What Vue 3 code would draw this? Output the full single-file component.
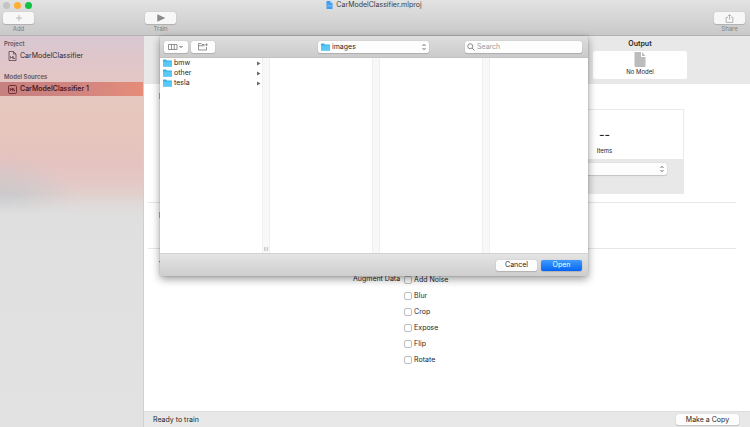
<script setup>
import { ref } from 'vue'

const folders = ['bmw', 'other', 'tesla']
const augmentations = ref([
  { id: 'noise', label: 'Add Noise', on: false },
  { id: 'blur', label: 'Blur', on: false },
  { id: 'crop', label: 'Crop', on: false },
  { id: 'expose', label: 'Expose', on: false },
  { id: 'flip', label: 'Flip', on: false },
  { id: 'rotate', label: 'Rotate', on: false }
])
const query = ref('')
</script>

<template>
  <div class="window">
    <header class="toolbar">
      <div class="titlebar">
        <div class="lights">
          <span class="light grey"></span>
          <span class="light amber"></span>
          <span class="light green"></span>
        </div>
        <h1 class="title">
          <svg class="title-icon" viewBox="0 0 14 16" aria-hidden="true">
            <path d="M1 0h8l4 4v12H1z" fill="#3f9df0" />
            <path d="M9 0v4h4z" fill="#c3e2fb" />
            <path d="M4 12V8l3 2 3-2v4" fill="none" stroke="#8cc8fa" stroke-width="1.5" />
          </svg>
          CarModelClassifier.mlproj
        </h1>
      </div>
      <div class="tools">
        <div class="tool">
          <button id="add" class="btn tool-btn" aria-labelledby="add-label">
            <svg viewBox="0 0 16 16" width="8" height="8"><path d="M8 2v12M2 8h12" stroke="#aaa" stroke-width="1.5" /></svg>
          </button>
          <label id="add-label" for="add">Add</label>
        </div>
        <div class="tool train">
          <button id="train" class="btn tool-btn" aria-labelledby="train-label">
            <svg viewBox="0 0 16 16" width="10" height="10"><path d="M2 2l13 6-13 6z" fill="#8a8a8a" /></svg>
          </button>
          <label id="train-label" for="train">Train</label>
        </div>
        <div class="tool share">
          <button id="share" class="btn tool-btn" aria-labelledby="share-label">
            <svg viewBox="0 0 16 16" width="9" height="9" fill="none" stroke="#aaa" stroke-width="1.5"><path d="M5 6H2v9h12V6h-3M8 10V1M5 4l3-3 3 3" /></svg>
          </button>
          <label id="share-label" for="share">Share</label>
        </div>
      </div>
    </header>

    <div class="body">
      <nav class="sidebar">
        <h2>Project</h2>
        <a class="row" href="#project">
          <svg viewBox="0 0 18 20" width="9" height="10" fill="none" stroke="#5c4650" stroke-width="1.6">
            <path d="M2 1h9l5 5v13H2zM11 1v5h5" />
            <path d="M5 15v-4l2 2 2-2v4M11 11v4h3" />
          </svg>
          CarModelClassifier
        </a>
        <h2 class="second">Model Sources</h2>
        <a class="row selected" href="#source">
          <svg viewBox="0 0 18 18" width="9" height="9" fill="none" stroke="#63232a" stroke-width="1.7">
            <rect x="1" y="1" width="16" height="16" rx="2.5" />
            <path d="M4.500 12V6.500l2.200 3 2.200-3V12M11.500 6v5.500H14" />
          </svg>
          CarModelClassifier 1
        </a>
      </nav>

      <main class="main">
        <section class="flow">
          <div class="output">
            <h2>Output</h2>
            <div class="model">
              <svg viewBox="0 0 24 30" width="12" height="15"><path d="M1 0h13v10h9v18q0 2-2 2H3q-2 0-2-2z" fill="#bcbcbc" /><path d="M16 0l7 8h-7z" fill="#bcbcbc" /></svg>
              <span>No Model</span>
            </div>
          </div>
        </section>

        <div class="settings">
          <section class="data">
            <h3>Data</h3>
            <div class="card">
              <div class="count"><strong>--</strong><span>Items</span></div>
              <div class="choice">
                <span class="select-wrap">
                  <select class="btn" aria-label="Data source"><option></option></select>
                  <svg class="chevrons" viewBox="0 0 10 16"><path d="M2 6l3-3.500L8 6M2 10l3 3.500L8 10" /></svg>
                </span>
              </div>
            </div>
          </section>
          <section class="validation"><h3>Data</h3></section>
          <section class="params">
            <svg class="disclosure" viewBox="0 0 10 8" width="5" height="4"><path d="M0 0h10L5 8z" fill="#555" /></svg>
            <fieldset>
              <legend>Augment Data</legend>
              <div class="checks">
                <label v-for="a in augmentations" :key="a.id" :for="a.id">
                  <input :id="a.id" v-model="a.on" type="checkbox" />{{ a.label }}
                </label>
              </div>
            </fieldset>
          </section>
        </div>

        <footer class="status">
          <span>Ready to train</span>
          <button class="btn copy">Make a Copy</button>
        </footer>
      </main>

      <div class="sheet" role="dialog" aria-label="Open">
        <div class="sheet-head">
          <button class="btn view" aria-label="Column view">
            <svg viewBox="0 0 32 16" width="16" height="8" fill="none" stroke="#777" stroke-width="1.6"><path d="M1 3h17v10H1zM7 3v10M12.500 3v10" /><path d="M23 6l3 3 3-3" stroke="#555" stroke-width="2" /></svg>
          </button>
          <button class="btn new" aria-label="New folder">
            <svg viewBox="0 0 20 16" width="10" height="8" fill="none" stroke="#777" stroke-width="1.6"><path d="M13 3H8L6 1H1v13h16V8M1 5.500h12M17 1v5M14.500 3.500h5" /></svg>
          </button>
          <span class="select-wrap location">
            <svg class="folder" viewBox="0 0 18 16"><path d="M0 2q0-1 1-1h5l2 2h9q1 0 1 1v10q0 1-1 1H1q-1 0-1-1z" fill="#37afe4" /><path d="M0 5h18v9q0 1-1 1H1q-1 0-1-1z" fill="#58c8f5" /></svg>
            <select class="btn" aria-label="Location"><option>images</option></select>
            <svg class="chevrons" viewBox="0 0 10 16"><path d="M2 6l3-3.500L8 6M2 10l3 3.500L8 10" /></svg>
          </span>
          <span class="search">
            <svg viewBox="0 0 16 16" width="8" height="8" fill="none" stroke="#777" stroke-width="1.7"><circle cx="6.500" cy="6.500" r="5" /><path d="M10 10l5 5" /></svg>
            <input v-model="query" class="btn" type="search" placeholder="Search" aria-label="Search" />
          </span>
        </div>
        <div class="browser">
          <div class="column">
            <a v-for="f in folders" :key="f" class="item" :href="'#' + f">
              <svg class="folder" viewBox="0 0 18 16"><path d="M0 2q0-1 1-1h5l2 2h9q1 0 1 1v10q0 1-1 1H1q-1 0-1-1z" fill="#37afe4" /><path d="M0 5h18v9q0 1-1 1H1q-1 0-1-1z" fill="#58c8f5" /></svg>
              <span>{{ f }}</span>
              <svg class="arrow" viewBox="0 0 8 10" width="4" height="5"><path d="M0 1l7 4-7 4z" fill="#6a6a6a" /></svg>
            </a>
          </div>
          <div class="gutter"><i class="grip"></i></div>
          <div class="column"></div>
          <div class="gutter"></div>
          <div class="column"></div>
          <div class="gutter"></div>
          <div class="column last"></div>
        </div>
        <div class="sheet-foot">
          <button class="btn">Cancel</button>
          <button class="btn primary">Open</button>
        </div>
      </div>
    </div>
  </div>
</template>

<style>
body { margin: 0; }
</style>

<style scoped>
* { box-sizing: border-box; }
.window {
  min-height: 100vh;
  display: flex;
  flex-direction: column;
  overflow: hidden;
  background: #fff;
  color: #262626;
  font: 7px/10px Inter, "Liberation Sans", sans-serif;
}
h1, h2, h3 { margin: 0; font-size: 7px; line-height: 10px; font-weight: 500; }
a { color: inherit; text-decoration: none; }
svg { flex: none; }
.btn {
  display: flex;
  align-items: center;
  justify-content: center;
  height: 12px;
  margin: 0;
  padding: 0;
  border: 0;
  border-radius: 2px;
  background: #fdfdfd;
  box-shadow: 0 0 1px #0004, 0 1px 1px #0002;
  color: #262626;
  font: inherit;
}
.toolbar {
  height: 36px;
  border-bottom: 1px solid #b2b2b2;
  background: linear-gradient(#e2e2e2, #c9c9c9);
}
.titlebar {
  display: grid;
  grid-template-columns: 1fr auto 1fr;
  align-items: center;
  height: 10px;
  padding-right: 2px;
}
.lights { display: flex; gap: 4px; padding-left: 3px; }
.light { width: 7px; height: 7px; border-radius: 50%; }
.grey { background: #c4c4c4; }
.amber { background: #fdae33; }
.green { background: #0fc243; }
.title { display: flex; align-items: center; gap: 3px; color: #3c3c3c; font-weight: 400; }
.title-icon { width: 7px; height: 8px; }
.tools { display: flex; padding: 2px 5px 0 3px; }
.tool { display: flex; flex-direction: column; align-items: center; width: 31px; color: #808080; font-size: 6px; }
.tool-btn { width: 31px; background: #f7f7f7; }
.train { margin-left: 111px; }
.share { margin-left: auto; }
.body { position: relative; flex: 1; display: flex; }
.sidebar {
  width: 144px;
  flex: none;
  padding-top: 3px;
  border-right: 1px solid #cfcfcf;
  background:
    linear-gradient(transparent 158px, #dfdfdf 178px, #e0e0e0 210px, #e2e2e2),
    radial-gradient(ellipse 80px 48px at 0 168px, #c6c8cc, #c6c8cc00),
    linear-gradient(#d8c8d2 0, #e0c6ca 25px, #e6c8c0 60px, #e6c6bd 95px, #e4c3c0 125px, #e4c8c5 145px, #e1d3d0 165px);
}
.sidebar h2 { padding-left: 4px; color: #63535b; font-size: 6px; font-weight: 600; }
.sidebar .second { margin-top: 9px; }
.row { display: flex; align-items: center; gap: 3px; height: 14px; padding-left: 8px; color: #33232a; }
.selected { background: linear-gradient(90deg, #c6807f, #cf8480 50%, #e58c79); color: #3d1015; font-weight: 500; }
.main { flex: 1; min-width: 0; display: flex; flex-direction: column; }
.flow { display: flex; justify-content: flex-end; height: 48px; padding: 3px 63px 0 0; background: #e8e8e8; }
.output { width: 94px; text-align: center; }
.output h2 { font-weight: 600; }
.model {
  display: flex;
  flex-direction: column;
  align-items: center;
  height: 28px;
  margin-top: 2px;
  padding-top: 1px;
  border-radius: 2px;
  background: #fff;
  font-size: 6px;
}
.settings { flex: 1; padding: 0 14px 0 4px; }
.settings section { padding-left: 11px; }
.data { height: 119px; padding-top: 8px; border-bottom: 1px solid #e6e6e6; }
.data h3, .validation h3 { color: #444; }
.card { width: 370px; height: 85px; margin: 7px 52px 0 auto; border: 1px solid #e9e9e9; }
.count { display: flex; flex-direction: column; align-items: center; height: 49px; padding: 20px 0 0 211px; font-size: 6px; }
.count strong { font-size: 12px; line-height: 10px; font-weight: 500; }
.count span { margin-top: 6px; }
.choice { height: 34px; padding: 4px 16px 0 80px; background: #e8e8e8; }
.select-wrap { position: relative; display: block; }
.select-wrap select { width: 100%; appearance: none; }
.chevrons { position: absolute; right: 2px; top: 2px; width: 6px; height: 8px; fill: none; stroke: #555; stroke-width: 1.6; }
.validation { height: 46px; padding-top: 8px; border-bottom: 1px solid #e6e6e6; }
.params { padding-top: 12px; }
.disclosure { display: block; margin-bottom: 7px; }
fieldset { display: flex; gap: 4px; margin: 0; padding: 0 0 0 194px; border: 0; min-width: 0; }
legend { float: left; padding: 2px 0 0; }
.checks { display: flex; flex-direction: column; }
.checks label { display: flex; align-items: center; gap: 2px; height: 16px; }
.checks input { appearance: none; width: 8px; height: 8px; margin: 0; border: 1px solid #bdbdbd; border-radius: 2px; background: #fff; }
.checks input:checked { background: #1a7cf8; }
.status {
  display: flex;
  align-items: center;
  justify-content: space-between;
  height: 16px;
  padding: 0 11px 0 9px;
  border-top: 1px solid #dedede;
  background: #e8e8e8;
}
.copy { width: 63px; height: 11px; }
.sheet {
  position: absolute;
  left: 160px;
  top: 0;
  width: 428px;
  border-radius: 0 0 2px 2px;
  background: #fff;
  box-shadow: 0 3px 9px #0006, 0 0 1px #0008;
  overflow: hidden;
}
.sheet-head { display: flex; align-items: center; height: 22px; padding: 0 6px 0 4px; border-bottom: 1px solid #c2c2c2; background: linear-gradient(#dedede, #cbcbcb); }
.view, .new { width: 24px; }
.new { margin-left: 3px; }
.location { width: 111px; margin-left: 103px; }
.location select { padding-left: 14px; }
.location .folder { position: absolute; left: 3px; top: 2px; }
.folder { width: 9px; height: 8px; }
.search { position: relative; flex: 1; margin-left: 36px; }
.search input { appearance: none; width: 100%; padding-left: 12px; outline: 0; }
.search input::placeholder { color: #999; opacity: 1; }
.search svg { position: absolute; left: 2px; top: 2px; }
.browser { display: flex; height: 195px; }
.column { flex: 51; }
.last { flex: 49; }
.item { display: flex; align-items: center; gap: 2px; height: 10px; padding: 0 1px 0 3px; }
.arrow { margin-left: auto; }
.gutter { display: flex; align-items: flex-end; justify-content: center; width: 8px; padding-bottom: 2px; border: solid #f0f0f0; border-width: 0 1px; background: #f8f8f8; }
.grip { width: 4px; height: 4px; border: solid #c9c9c9; border-width: 0 1px; background: #e4e4e4; }
.sheet-foot { display: flex; align-items: center; justify-content: flex-end; gap: 4px; height: 23px; padding-right: 6px; border-top: 1px solid #d2d2d2; background: linear-gradient(#e4e4e4, #cecece); }
.sheet-foot .btn { width: 41px; height: 11px; }
.sheet-foot .primary { background: linear-gradient(#3f9bfb, #0565f5); color: #fff; }
</style>
